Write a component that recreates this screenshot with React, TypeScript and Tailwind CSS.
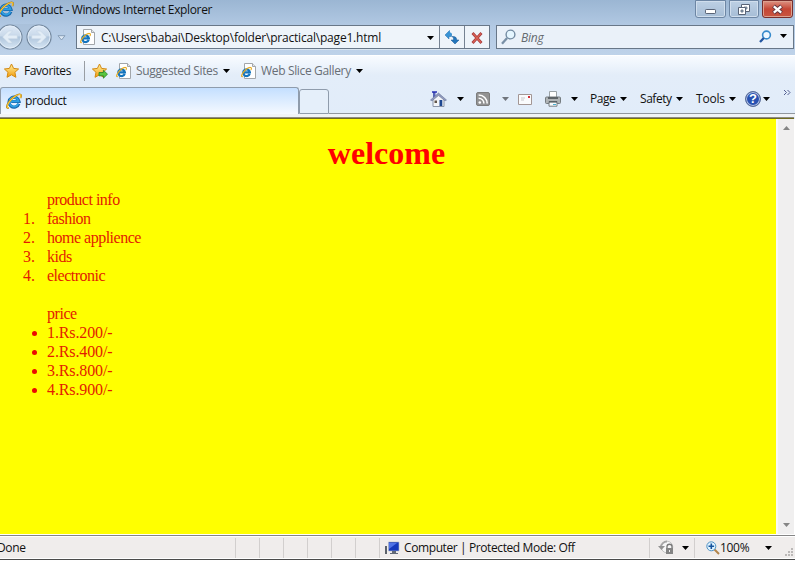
import React from 'react';

const ui = "font-['Open_Sans','Noto_Sans',sans-serif] text-[12px] leading-[16px] whitespace-nowrap text-[#111] shrink-0";

function IELogo({ className = '' }: { className?: string }) {
  return (
    <svg viewBox="0 0 16 16" className={`shrink-0 ${className}`}>
      <path d="M12.8 10.8A5 5 0 1 1 13 8.5H5.2" fill="none" stroke="#1767ad" strokeWidth="3.2" />
      <path d="M12.3 10.6A4.6 4.6 0 1 1 12.5 8.2H5.2" fill="none" stroke="#2c9fe2" strokeWidth="1.9" />
      <path d="M4.3 6.5A4.5 4.5 0 0 1 9 4" fill="none" stroke="#8edcff" strokeWidth="1" />
      <path d="M2.8 14.8C.2 15.6.2 12.6 3.3 8.5 7 3.6 12.8.2 14.6 1.6c.9.8.5 2.1-.2 3.4" fill="none" stroke="#a9780e" strokeWidth="1.7" />
      <path d="M2.8 14.6C.6 15.2.6 12.6 3.5 8.7 7 4 12.8.6 14.5 1.8c.7.6.4 1.8-.2 2.9" fill="none" stroke="#fbc93c" strokeWidth="1.1" />
    </svg>
  );
}

function PageIcon({ className = '' }: { className?: string }) {
  return (
    <svg viewBox="0 0 16 16" className={`h-4 w-4 shrink-0 ${className}`}>
      <path d="M3.5.5h8l3 3v12h-11z" fill="#fff" stroke="#a2a6aa" />
      <path d="M11.5.5v3h3" fill="#e2e5e8" stroke="#a2a6aa" />
      <svg x="0" y="3.5" width="11" height="11" viewBox="0 0 16 16">
        <path d="M12.6 10.6A4.8 4.8 0 1 1 12.8 8.4H5.2" fill="none" stroke="#1474bd" strokeWidth="3.3" />
        <path d="M2.8 14.8C.2 15.6.2 12.6 3.3 8.5 7 3.6 12.8.2 14.6 1.6c.9.8.5 2.1-.2 3.4" fill="none" stroke="#e8ad23" strokeWidth="1.7" />
      </svg>
    </svg>
  );
}

function Arrow({ className = '' }: { className?: string }) {
  return (
    <svg viewBox="0 0 7 4" className={`h-1 w-[7px] shrink-0 ${className}`}>
      <path d="M0 0h7L3.5 4z" fill="currentColor" />
    </svg>
  );
}

function Star({ add = false, className = '' }: { add?: boolean; className?: string }) {
  return (
    <svg viewBox="0 0 16 16" className={`h-4 w-4 shrink-0 ${className}`}>
      <defs>
        <linearGradient id="gold" x2="0" y2="1">
          <stop stopColor="#fff5a7" />
          <stop offset="1" stopColor="#f39b09" />
        </linearGradient>
      </defs>
      <path d="M7.5 1l2.1 4.4 5 .6-3.7 3.3 1 5-4.4-2.5-4.5 2.5 1-5L.4 6l5-.6z" fill="url(#gold)" stroke="#d38912" strokeLinejoin="round" />
      {add && <path d="M7 9.5h4.4V7.2l4.1 4-4.1 4v-2.4H7z" fill="#58c53f" stroke="#268229" strokeWidth=".8" />}
    </svg>
  );
}

function RoundButton({ flip = false, className = '' }: { flip?: boolean; className?: string }) {
  return (
    <svg viewBox="0 0 26 26" className={`h-[26px] w-[26px] shrink-0 ${className}`}>
      <defs>
        <linearGradient id="glass" x2="0" y2="1">
          <stop stopColor="#e0ebf7" />
          <stop offset=".45" stopColor="#c9d9ea" />
          <stop offset=".5" stopColor="#afc5dc" />
          <stop offset="1" stopColor="#d8e7f5" />
        </linearGradient>
      </defs>
      <circle cx="13" cy="13" r="12" fill="url(#glass)" stroke="#72869c" strokeWidth="1.1" />
      <circle cx="13" cy="13" r="11" fill="none" stroke="#e6f0fa" strokeWidth=".8" />
      <path d="M5.5 13l6-6h4l-4.2 4.2h9v3.6h-9l4.2 4.2h-4z" fill="#e3edf6" stroke="#c3d3e3" strokeWidth=".5" transform={flip ? 'rotate(180 13 13)' : undefined} />
    </svg>
  );
}

function WindowButtons() {
  return (
    <div className="ml-auto mr-[2px] flex gap-[3px] self-start">
      <div className="h-[18px] w-[31px] rounded-b-[3px] border border-[#6d86a4] bg-gradient-to-b from-[#bdd0e4] to-[#a6bdd6] shadow-[inset_0_0_0_1px_#d0deed]">
        <svg viewBox="0 0 29 17" className="h-[17px] w-[29px]"><rect x="9.5" y="8.5" width="10" height="4" rx=".7" fill="#fff" stroke="#596477" /></svg>
      </div>
      <div className="h-[18px] w-[30px] rounded-b-[3px] border border-[#6d86a4] bg-gradient-to-b from-[#bdd0e4] to-[#a6bdd6] shadow-[inset_0_0_0_1px_#d0deed]">
        <svg viewBox="0 0 28 17" className="h-[17px] w-[28px]">
          <path d="M11.5 3.5h8v7h-8z" fill="#fff" stroke="#596477" /><path d="M14 6h3v2h-3z" fill="#a7bdd3" stroke="#596477" strokeWidth=".7" />
          <path d="M8.5 6.5h7v7h-7z" fill="#fff" stroke="#596477" /><path d="M11 9h2v2h-2z" fill="#a7bdd3" stroke="#596477" strokeWidth=".8" />
        </svg>
      </div>
      <div className="h-[18px] w-[31px] rounded-b-[3px] border border-[#782e2c] bg-gradient-to-b from-[#dc9183] via-[#c54635] to-[#c95642] shadow-[inset_0_0_0_1px_#dda18f]">
        <svg viewBox="0 0 29 17" className="h-[17px] w-[29px]">
          <path d="M10.5 5l8 7m0-7l-8 7" stroke="#5f3540" strokeWidth="4.3" /><path d="M10.8 5.3l7.4 6.4m0-6.4l-7.4 6.4" stroke="#fff" strokeWidth="2.3" />
        </svg>
      </div>
    </div>
  );
}

function AddressRow() {
  return (
    <div className="flex h-[30px] items-start">
      <div className="-ml-[3px] -mt-px flex h-[26px] items-center rounded-full bg-[#a5bdd6]/60"><RoundButton /><RoundButton flip className="ml-[3px]" /></div>
      <svg viewBox="0 0 9 6" className="ml-[5px] mt-[10px] h-[6px] w-[9px]"><path d="M1 .7h7L4.5 5z" fill="#dce8f4" stroke="#7890ab" strokeWidth=".8" /></svg>
      <div className="ml-[10px] flex h-[24px] w-[414px] border border-[#687788] bg-[#eef4fa] shadow-[0_1px_0_#dae6f2]">
        <PageIcon className="ml-[3px] mt-[3px]" />
        <div className={`${ui} ml-[5px] mt-[4px] w-[326px] tracking-[-0.2px]`}>C:\Users\babai\Desktop\folder\practical\page1.html</div>
        <Arrow className="mt-[10px]" />
        <div className="ml-[5px] flex w-[25px] border-l border-[#758292]">
          <svg viewBox="0 0 16 16" className="ml-[4px] mt-[3px] h-4 w-4">
            <path d="M5.5 1.5L1 6l4 4V7.5h2.5V5H5.2z" fill="#3994d5" stroke="#1d6bad" strokeWidth=".5" />
            <path d="M5.4 1.5c.2 1.6.8 2.2 2.2 2.5v2L3 7z" fill="#3994d5" />
            <path d="M11 15l-4-4h2.6c0-2-.2-2.7-1.6-3.5 3.2-.3 4.7.8 4.7 3.5H15z" fill="#2375bb" stroke="#135492" strokeWidth=".5" />
          </svg>
        </div>
        <div className="flex flex-1 border-l border-[#758292]">
          <svg viewBox="0 0 14 14" className="ml-[5px] mt-[5px] h-[14px] w-[14px]"><path d="M2.5 2l9 10m0-10l-9 10" stroke="#a73a3c" strokeWidth="2.7" /><path d="M3 2.5l8 9m0-9l-8 9" stroke="#da6254" strokeWidth="1.2" /></svg>
        </div>
      </div>
      <div className="ml-[6px] flex h-[24px] w-[298px] shrink-0 border border-[#687788] bg-[#eaf1f9]">
        <svg viewBox="0 0 16 16" className="ml-[4px] mt-[3px] h-4 w-4"><circle cx="9.5" cy="5.5" r="4.4" fill="#e5f6ff" stroke="#738ba2" strokeWidth="1.4" /><path d="M6.1 9L1 14.8" stroke="#7990a6" strokeWidth="2.3" /></svg>
        <div className={`${ui} ml-[4px] mt-[4px] w-[237px] italic tracking-[-0.25px] !text-[#656a70]`}>Bing</div>
        <svg viewBox="0 0 14 14" className="mt-[4px] h-[14px] w-[14px] shrink-0"><circle cx="8.5" cy="5" r="3.9" fill="#eef7ff" stroke="#368acb" strokeWidth="1.6" /><path d="M5.8 8L2 12" stroke="#2356a0" strokeWidth="2.3" /></svg>
        <Arrow className="ml-[8px] mt-[8px]" />
      </div>
    </div>
  );
}

function FavoritesBar() {
  return (
    <div className="flex h-[32px] items-center pb-[3px]">
      <Star className="ml-[4px]" />
      <span className={`${ui} ml-[4px] w-[60px] tracking-[-0.42px]`}>Favorites</span>
      <span className="h-5 w-px bg-[#989da3]" />
      <Star add className="ml-[7px]" />
      <PageIcon className="ml-[8px]" />
      <span className={`${ui} ml-[4px] w-[87px] tracking-[-0.36px] !text-[#686e76]`}>Suggested Sites</span>
      <Arrow />
      <PageIcon className="ml-[11px]" />
      <span className={`${ui} ml-[4px] w-[95px] tracking-[-0.34px] !text-[#686e76]`}>Web Slice Gallery</span>
      <Arrow />
    </div>
  );
}

function HomeIcon() {
  return (
    <svg viewBox="0 0 17 17" className="h-[17px] w-[17px] shrink-0">
      <path d="M3 8v7.5h11V8L8.5 3z" fill="#f3f5f8" stroke="#8b95a8" />
      <path d="M3 1h2.5v4L3 7z" fill="#5663b7" />
      <path d="M.5 9L8.5 2l8 7-1.5.8-6.5-5.2L2 9.8z" fill="#929bbd" stroke="#5b668f" strokeWidth=".5" />
      <path d="M4.5 9.5h2.5V12H4.5z" fill="#605448" /><path d="M9.5 9h2.8v6H9.5z" fill="#1d4790" />
      <path d="M2 1h5" stroke="#1c25b1" strokeWidth="1.4" />
    </svg>
  );
}

function RssIcon() {
  return (
    <svg viewBox="0 0 14 14" className="h-[14px] w-[14px] shrink-0">
      <rect x=".5" y=".5" width="13" height="13" rx="1.5" fill="#929292" stroke="#7c7c7c" />
      <circle cx="3.8" cy="10.5" r="1.3" fill="#fff" /><path d="M2.6 6.2c3 0 5.3 2.2 5.3 5.4M2.6 3c4.9 0 8.6 3.7 8.6 8.6" fill="none" stroke="#fff" strokeWidth="1.6" />
    </svg>
  );
}

function PrinterIcon() {
  return (
    <svg viewBox="0 0 16 16" className="h-4 w-4 shrink-0">
      <path d="M4.5.5h7V7h-7z" fill="#fff" stroke="#9aa2a6" /><rect x=".5" y="6" width="15" height="6.5" rx="1" fill="#b0b4b6" stroke="#767d81" />
      <path d="M3 7h10" stroke="#5e6468" strokeWidth="2" /><path d="M4 10.5h8v4.7H4z" fill="#f8fafb" stroke="#777f83" /><path d="M4 11h8" stroke="#3c4245" /><path d="M8 13.5h3" stroke="#49afd1" />
    </svg>
  );
}

function TabBar() {
  return (
    <div className="flex h-[26px] items-start">
      <div className="-mt-px flex h-[27px] w-[299px] shrink-0 items-center rounded-t-[3px] border border-b-0 border-[#8f9cac] bg-gradient-to-b from-[#c4dfff] to-[#f5f9ff]">
        <IELogo className="ml-[5px] h-4 w-4" />
        <span className={`${ui} ml-[3px] tracking-[-0.4px]`}>product</span>
      </div>
      <div className="mt-px h-[25px] w-[30px] shrink-0 rounded-t-[3px] border border-[#8f9cac] bg-[#e5effa]" />
      <div className="flex h-[26px] flex-1 items-center border-b border-[#91979e] pb-[3px] pl-[101px]">
        <HomeIcon /><Arrow className="ml-[10px]" />
        <span className="w-3" /><RssIcon />
        <Arrow className="ml-[12px] text-[#70757c]" />
        <svg viewBox="0 0 14 11" className="ml-[9px] h-[11px] w-[14px] shrink-0"><path d="M.5.5h13v10H.5z" fill="#fafbfc" stroke="#a39694" /><path d="M3 4h4M3 6h3" stroke="#c8c8c9" /><path d="M10 2h2v2h-2z" fill="#d42f37" /></svg>
        <span className="w-[13px]" /><PrinterIcon /><Arrow className="ml-[10px]" />
        <span className={`${ui} ml-[12px] w-[30px] tracking-[-0.45px]`}>Page</span><Arrow />
        <span className={`${ui} ml-[13px] w-[36px] tracking-[-0.45px]`}>Safety</span><Arrow />
        <span className={`${ui} ml-[13px] w-[33px] tracking-[-0.2px]`}>Tools</span><Arrow />
        <div className="ml-[9px] flex h-4 w-4 shrink-0 items-center justify-center rounded-full border border-[#5c6f99] bg-[#2851b1] font-['Liberation_Sans',sans-serif] text-[13px] font-bold text-white shadow-[inset_0_0_0_1px_#b6c4e5]">?</div>
        <Arrow className="ml-[2px]" />
        <svg viewBox="0 0 8 7" className="mb-[14px] ml-[13px] h-[7px] w-[8px] shrink-0"><path d="M1 1l2.5 2.5L1 6M4.5 1L7 3.5 4.5 6" fill="none" stroke="#535e91" /></svg>
      </div>
    </div>
  );
}

const categories = ['fashion', 'home applience', 'kids', 'electronic'];
const prices = ['1.Rs.200/-', '2.Rs.400/-', '3.Rs.800/-', '4.Rs.900/-'];

function PageContent() {
  return (
    <main className="h-[415px] w-[776px] shrink-0 bg-[#ff0] font-['Liberation_Serif',serif] text-[16px] leading-[19px] text-[#e31b00]">
      <h1 className="pt-[16px] pr-[3px] text-center text-[32px] font-bold leading-[37px] text-[#f00]">welcome</h1>
      <ol className="mt-[18px] pl-[47px] tracking-[-0.5px]">
        <div>product info</div>
        {categories.map((item, i) => (
          <li key={item} className="h-[19px]"><span className="-ml-6 inline-block w-6 tracking-normal">{i + 1}.</span>{item}</li>
        ))}
      </ol>
      <ul className="mt-[19px] pl-[47px] tracking-[-0.12px]">
        <div className="tracking-[-0.45px]">price</div>
        {prices.map((item) => (
          <li key={item} className="-ml-[15px] flex h-[19px] items-center"><span className="mr-[10px] mt-[2px] h-[5px] w-[5px] rounded-full bg-[#ec0900]" />{item}</li>
        ))}
      </ul>
    </main>
  );
}

function StatusBar() {
  return (
    <footer className="flex h-[24px] items-center border-b border-[#4b4b4b] bg-[#f0edec] pt-px shadow-[inset_0_1px_0_#fff,inset_0_-1px_0_#fff]">
      <span className={`${ui} -ml-[3px] w-[238px] tracking-[-0.35px]`}>Done</span>
      {[0, 1, 2, 3, 4, 5].map((n) => <span key={n} className="h-[20px] w-[24px] shrink-0 border-l border-[#d2cfce]" />)}
      <div className="flex h-[20px] w-[270px] shrink-0 items-center border-l border-[#d2cfce]">
        <svg viewBox="0 0 16 16" className="ml-[4px] h-4 w-4"><path d="M4.5 2h10.5v9H4.5z" fill="#163abc" stroke="#b4bcc9" strokeWidth=".6" /><path d="M5 3h8L5 9z" fill="#4f73e6" /><path d="M8 11h4v2h2v1H6v-1h2z" fill="#626a78" /><path d="M1 6h2v8H1z" fill="#5c626a" /></svg>
        <span className={`${ui} ml-[4px] tracking-[-0.4px]`}>Computer | Protected Mode: Off</span>
      </div>
      <div className="flex h-[20px] w-[45px] shrink-0 items-center border-l border-[#d2cfce]">
        <svg viewBox="0 0 17 16" className="ml-[8px] h-4 w-[17px] shrink-0"><circle cx="9" cy="7" r="5.8" fill="#f7f7f7" stroke="#c5c5c5" /><path d="M3 7C3 4 6 1.5 9 1.5" fill="none" stroke="#a6a6a6" strokeWidth="2" /><path d="M0 6h7l-3.5 4z" fill="#929292" /><path d="M9 8V6.5c0-3 5-3 5 0V8" fill="none" stroke="#777" strokeWidth="1.3" /><path d="M8 8h7v6H8z" fill="#848484" /><path d="M11 10h1v2h-1z" fill="#eee" /></svg>
        <Arrow className="ml-[7px]" />
      </div>
      <div className="flex h-[20px] flex-1 items-center border-l border-[#d2cfce]">
        <svg viewBox="0 0 14 14" className="ml-[11px] h-[14px] w-[14px] shrink-0"><path d="M8 8l5 5" stroke="#b3854b" strokeWidth="2" /><circle cx="5.3" cy="5.3" r="4.5" fill="#dff3ff" stroke="#4e91c3" /><path d="M5.3 2.5v5.6M2.5 5.3h5.6" stroke="#16549d" strokeWidth="1.6" /></svg>
        <span className={`${ui} w-[45px] tracking-[-0.3px]`}>100%</span><Arrow />
        <svg viewBox="0 0 9 9" className="ml-auto mr-[1px] mt-[9px] h-[9px] w-[9px]"><path d="M6 0h2v2H6zM3 3h2v2H3zM6 3h2v2H6zM0 6h2v2H0zM3 6h2v2H3zM6 6h2v2H6z" fill="#bbb8b7" /></svg>
      </div>
    </footer>
  );
}

export default function App() {
  return (
    <div className="h-[567px] w-[795px] overflow-hidden bg-white">
      <header>
        <div className="h-[55px] bg-gradient-to-b from-[#9bb6d3] via-[#b3cae4] to-[#bed2e9]">
          <div className="flex h-[25px] items-start">
            <IELogo className="-ml-[2px] mt-[1px] h-4 w-4" />
            <span className={`${ui} ml-[7px] mt-[2px] tracking-[-0.36px]`}>product - Windows Internet Explorer</span>
            <WindowButtons />
          </div>
          <AddressRow />
        </div>
        <div className="h-[64px] border-t border-white bg-gradient-to-b from-[#f8fbff] via-[#e3edf9] via-30% to-[#e1ecf9]">
          <FavoritesBar />
          <TabBar />
          <div className="h-[3px] bg-[#f0f3f6]" />
          <div className="h-[2px] w-[794px] border-t border-[#8e8b81] bg-[#716c20]" />
        </div>
      </header>
      <div className="flex h-[416px]">
        <PageContent />
        <aside className="flex h-[415px] w-[18px] flex-col items-center justify-between border-l-2 border-[#faf9f4] bg-[#f0efef] pb-[7px] pt-[7px] text-[#858585]">
          <Arrow className="rotate-180" /><Arrow />
        </aside>
      </div>
      <div className="h-px bg-[#858585]" />
      <StatusBar />
    </div>
  );
}
